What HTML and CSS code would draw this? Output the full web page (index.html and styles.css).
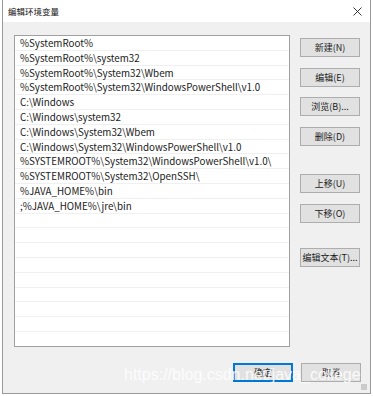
FILE: index.html
```html
<!DOCTYPE html>
<html lang="zh-CN">
<head>
<meta charset="utf-8">
<title>编辑环境变量</title>
<link rel="stylesheet" href="styles.css">
</head>
<body>
<div class="window">
  <div class="titlebar">
    <span class="title">编辑环境变量</span>
    <svg class="close" width="9" height="9" viewBox="0 0 9 9"><path d="M0.5 0.5 L8.5 8.5 M8.5 0.5 L0.5 8.5" stroke="#222" stroke-width="0.9" fill="none"/></svg>
  </div>
  <div class="content">
    <div class="main">
      <div class="list">
        <div class="row">%SystemRoot%</div>
        <div class="row">%SystemRoot%\system32</div>
        <div class="row">%SystemRoot%\System32\Wbem</div>
        <div class="row">%SystemRoot%\System32\WindowsPowerShell\v1.0</div>
        <div class="row">C:\Windows</div>
        <div class="row">C:\Windows\system32</div>
        <div class="row">C:\Windows\System32\Wbem</div>
        <div class="row">C:\Windows\System32\WindowsPowerShell\v1.0</div>
        <div class="row">%SYSTEMROOT%\System32\WindowsPowerShell\v1.0\</div>
        <div class="row">%SYSTEMROOT%\System32\OpenSSH\</div>
        <div class="row">%JAVA_HOME%\bin</div>
        <div class="row">;%JAVA_HOME%\jre\bin</div>
        <div class="row"></div>
        <div class="row"></div>
        <div class="row"></div>
        <div class="row"></div>
        <div class="row"></div>
        <div class="row"></div>
        <div class="row"></div>
        <div class="row"></div>
        <div class="row"></div>
      </div>
      <div class="side">
        <div class="group">
          <button class="btn">新建(N)</button>
          <button class="btn">编辑(E)</button>
          <button class="btn">浏览(B)...</button>
          <button class="btn">删除(D)</button>
        </div>
        <div class="group move">
          <button class="btn">上移(U)</button>
          <button class="btn">下移(O)</button>
        </div>
        <div class="group text">
          <button class="btn">编辑文本(T)...</button>
        </div>
      </div>
    </div>
    <div class="footer">
      <button class="btn primary">确定</button>
      <button class="btn">取消</button>
    </div>
  </div>
  <span class="grip"></span>
  <span class="watermark">https://blog.csdn.net/java_college</span>
</div>
</body>
</html>
```

FILE: styles.css
```css
* { box-sizing: border-box; }
html, body {
  margin: 0;
  padding: 0;
  background: #ffffff;
}
body {
  font-family: "Noto Sans CJK SC", "Noto Sans", sans-serif;
  font-size: 9px;
  color: #111;
}
.window {
  position: relative;
  margin-left: 2px;
  width: 369px;
  height: 394px;
  background: #f0f0f0;
  border: 1px solid #9a9a9a;
  border-top: none;
  overflow: hidden;
}
.titlebar {
  height: 22px;
  background: #ffffff;
  display: flex;
  align-items: center;
  justify-content: space-between;
  padding: 0 8px 0 5px;
}
.title {
  font-size: 8.5px;
  color: #111;
}
.close { display: block; }
.content {
  padding: 13px 9px 0 11px;
}
.main {
  display: flex;
  gap: 10px;
}
.list {
  width: 276px;
  height: 312px;
  background: #fff;
  border: 1px solid #a0a0a0;
  overflow: hidden;
}
.row {
  height: 14.8px;
  line-height: 15.4px;
  padding-left: 5px;
  border-bottom: 1px solid #f0f0f0;
  white-space: nowrap;
  font-size: 9.8px;
  color: #1a1a1a;
}
.side {
  display: flex;
  flex-direction: column;
  padding-top: 3px;
}
.group {
  display: flex;
  flex-direction: column;
  gap: 10.5px;
}
.group.move { margin-top: 28px; gap: 11px; }
.group.text { margin-top: 25px; }
.btn {
  width: 60px;
  height: 19px;
  padding: 0;
  background: #e1e1e1;
  border: 1px solid #adadad;
  font-family: "Noto Sans CJK SC", "Noto Sans", sans-serif;
  font-size: 9px;
  color: #1a1a1a;
  line-height: 17px;
}
.btn.primary {
  border: 1px solid #0078d7;
  box-shadow: inset 0 0 0 1px #0078d7;
}
.footer {
  display: flex;
  justify-content: flex-end;
  gap: 8px;
  padding-top: 16px;
}
.grip {
  position: absolute;
  right: 3px;
  bottom: 3px;
  width: 6px;
  height: 6px;
  background-image: radial-gradient(circle, #a0a0a0 0.6px, transparent 0.8px);
  background-size: 2px 2px;
}
.watermark {
  position: absolute;
  left: 121px;
  top: 366px;
  font-family: "Liberation Sans", Arial, sans-serif;
  font-size: 16px;
  color: rgba(255, 255, 255, 0.85);
  white-space: nowrap;
  pointer-events: none;
}
```
